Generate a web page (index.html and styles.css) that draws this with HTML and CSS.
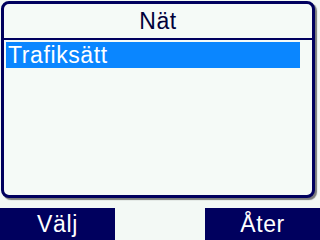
FILE: index.html
```html
<!DOCTYPE html>
<html>
<head>
<meta charset="utf-8">
<link rel="stylesheet" href="styles.css">
</head>
<body>
<div class="screen">
  <div class="frame">
    <div class="title">Nät</div>
    <div class="list">
      <div class="item selected">Trafiksätt</div>
    </div>
  </div>
  <div class="softkeys">
    <div class="key">Välj</div>
    <div class="key-gap"></div>
    <div class="key">Åter</div>
  </div>
</div>
</body>
</html>
```
FILE: styles.css
```css
html, body {
  margin: 0;
  padding: 0;
  background: #f3f9f5;
}
.screen {
  width: 320px;
  height: 240px;
  display: flex;
  flex-direction: column;
  font-family: "Liberation Sans", Arial, sans-serif;
  font-size: 23px;
  letter-spacing: 0.6px;
}
.frame {
  box-sizing: border-box;
  margin: 1px 0 0 1px;
  width: 314px;
  height: 197px;
  border: 3px solid #00005e;
  border-radius: 8px;
  box-shadow: 2px 2px 1px rgba(70, 70, 70, 0.7);
  background: #f5faf7;
  display: flex;
  flex-direction: column;
}
.title {
  height: 33px;
  padding-top: 1px;
  line-height: 33px;
  text-align: center;
  color: #00003a;
  border-bottom: 2px solid #00005e;
}
.list {
  padding: 2px 0 0 2px;
}
.item {
  width: 294px;
  height: 26px;
  line-height: 26px;
  padding-left: 2px;
  box-sizing: border-box;
  color: #ffffff;
}
.item.selected {
  background: #0a86ff;
}
.softkeys {
  margin-top: 10px;
  height: 32px;
  display: flex;
}
.key {
  width: 115px;
  height: 31px;
  padding-top: 1px;
  line-height: 31px;
  background: #00005e;
  color: #ffffff;
  text-align: center;
}
.key-gap {
  flex: 1;
}
```
